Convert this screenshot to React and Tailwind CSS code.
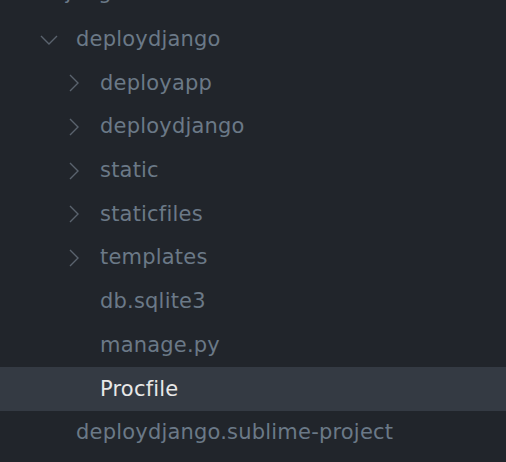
const rows = [
  { name: 'django-tutorial', depth: 0, kind: 'open' },
  { name: 'deploydjango', depth: 1, kind: 'open' },
  { name: 'deployapp', depth: 2, kind: 'closed' },
  { name: 'deploydjango', depth: 2, kind: 'closed' },
  { name: 'static', depth: 2, kind: 'closed' },
  { name: 'staticfiles', depth: 2, kind: 'closed' },
  { name: 'templates', depth: 2, kind: 'closed' },
  { name: 'db.sqlite3', depth: 2, kind: 'file' },
  { name: 'manage.py', depth: 2, kind: 'file' },
  { name: 'Procfile', depth: 2, kind: 'file', selected: true },
  { name: 'deploydjango.sublime-project', depth: 1, kind: 'file' },
]

const pads = ['pl-[52px]', 'pl-[76px]', 'pl-[100px]']

function Chevron({ open }) {
  if (open) {
    return (
      <svg className="absolute -left-[36px] top-1/2 -translate-y-1/2" width="18" height="10" viewBox="0 0 18 10" fill="none">
        <path d="M1 1l8 8 8-8" stroke="#5a636e" strokeWidth="1.4" />
      </svg>
    )
  }
  return (
    <svg className="absolute -left-[31px] top-1/2 -translate-y-1/2" width="10" height="18" viewBox="0 0 10 18" fill="none">
      <path d="M1 1l8 8-8 8" stroke="#5a636e" strokeWidth="1.4" />
    </svg>
  )
}

export default function App() {
  return (
    <div className="w-[506px] h-[462px] overflow-hidden bg-[#21252b]" style={{ fontFamily: '"DejaVu Sans", sans-serif' }}>
      <div className="-mt-[33px] flex flex-col">
        {rows.map((r, i) => (
          <div
            key={i}
            className={`${i === 0 ? 'h-[50.7px]' : 'h-[43.7px]'} flex items-center ${pads[r.depth]} ${r.selected ? 'bg-[#343a43]' : ''}`}
          >
            <span className={`relative text-[21px] tracking-[0.2px] leading-none ${r.selected ? 'text-[#e8e8e8]' : 'text-[#6b7987]'}`}>
              {r.kind !== 'file' && <Chevron open={r.kind === 'open'} />}
              {r.name}
            </span>
          </div>
        ))}
      </div>
    </div>
  )
}
